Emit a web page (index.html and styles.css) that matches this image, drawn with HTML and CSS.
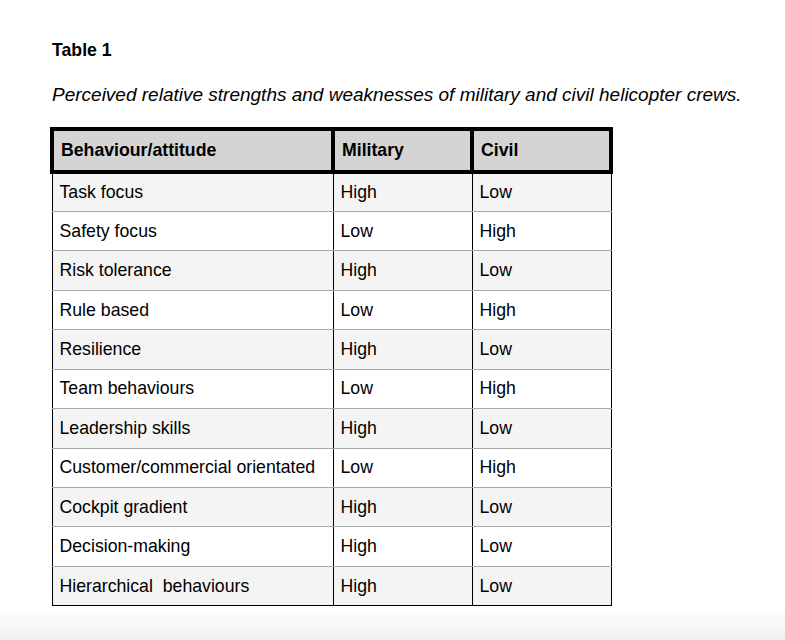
FILE: index.html
```html
<!DOCTYPE html>
<html lang="en">
<head>
<meta charset="utf-8">
<title>Table 1</title>
<link rel="stylesheet" href="styles.css">
</head>
<body>
<main class="doc">
  <h1 class="table-label">Table 1</h1>
  <p class="caption">Perceived relative strengths and weaknesses of military and civil helicopter crews.</p>
  <table class="data">
    <colgroup>
      <col class="c1"><col class="c2"><col class="c3">
    </colgroup>
    <thead>
      <tr><th>Behaviour/attitude</th><th>Military</th><th>Civil</th></tr>
    </thead>
    <tbody>
      <tr><td>Task focus</td><td>High</td><td>Low</td></tr>
      <tr><td>Safety focus</td><td>Low</td><td>High</td></tr>
      <tr><td>Risk tolerance</td><td>High</td><td>Low</td></tr>
      <tr><td>Rule based</td><td>Low</td><td>High</td></tr>
      <tr><td>Resilience</td><td>High</td><td>Low</td></tr>
      <tr><td>Team behaviours</td><td>Low</td><td>High</td></tr>
      <tr><td>Leadership skills</td><td>High</td><td>Low</td></tr>
      <tr><td>Customer/commercial orientated</td><td>Low</td><td>High</td></tr>
      <tr><td>Cockpit gradient</td><td>High</td><td>Low</td></tr>
      <tr><td>Decision-making</td><td>High</td><td>Low</td></tr>
      <tr><td>Hierarchical&nbsp; behaviours</td><td>High</td><td>Low</td></tr>
    </tbody>
  </table>
</main>
</body>
</html>
```

FILE: styles.css
```css
html {
  height: 100%;
  background: linear-gradient(to bottom, #ffffff 0, #ffffff 606px, #f1f1f1 640px);
}
body {
  margin: 0;
  font-family: "Liberation Sans", Arial, Helvetica, sans-serif;
  color: #000;
}
.doc {
  padding: 40px 0 0 52px;
}
.table-label {
  margin: 0;
  font-size: 17.7px;
  font-weight: bold;
  line-height: 20px;
}
.caption {
  margin: 24px 0 0 0;
  font-size: 19px;
  font-style: italic;
  line-height: 22px;
}
.data {
  margin-top: 21px;
  margin-left: -2px;
  border-collapse: collapse;
  font-size: 17.7px;
  table-layout: fixed;
  width: 559px;
}
.c1 { width: 281px; }
.c2 { width: 139px; }
.c3 { width: 139px; }
.data th {
  height: 39px;
  background: #d4d4d4;
  border: 4px solid #000;
  text-align: left;
  font-weight: bold;
  padding: 0 0 0 7px;
}
.data td {
  height: 39.45px;
  padding: 0 0 0 7px;
  border-left: 1px solid #000;
  border-right: 1px solid #000;
  border-top: 1px solid #a9a9a9;
  border-bottom: 1px solid #a9a9a9;
  box-sizing: border-box;
}
.data tbody tr:nth-child(odd) td {
  background: #f4f4f4;
}
.data tbody tr:last-child td {
  border-bottom: 1px solid #000;
}
```
